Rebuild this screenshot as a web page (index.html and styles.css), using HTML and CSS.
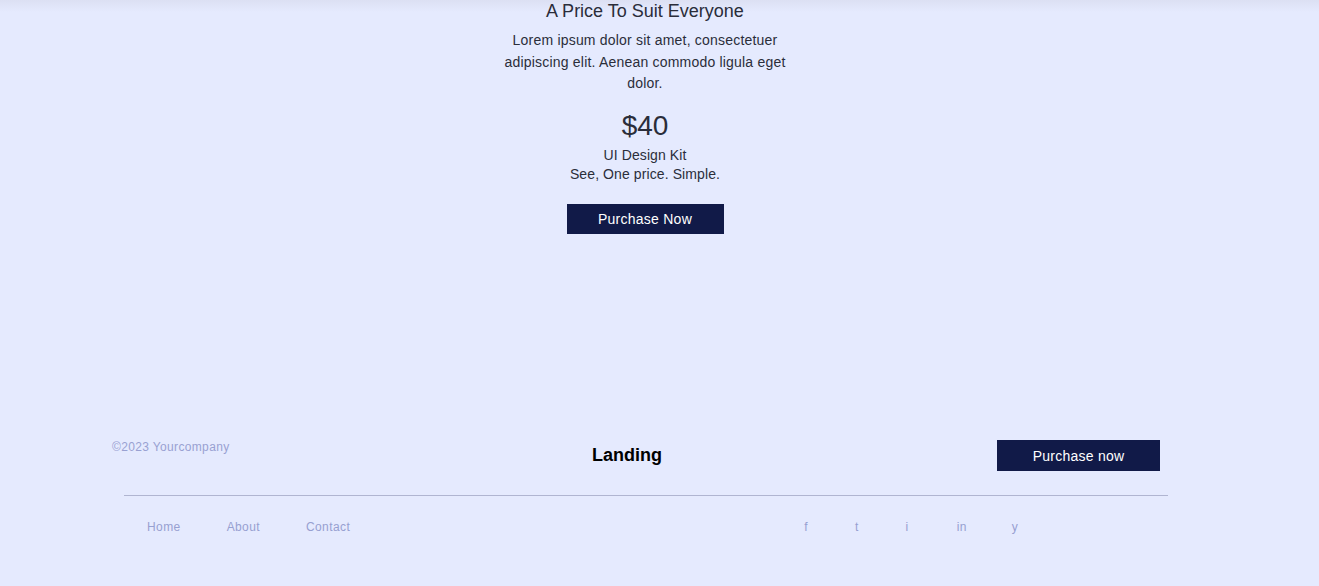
FILE: index.html
```html
<!DOCTYPE html>
<html lang="en">
<head>
<meta charset="utf-8">
<title>Landing</title>
<link rel="stylesheet" href="styles.css">
</head>
<body>
<main class="pricing">
  <h2 class="pricing-title">A Price To Suit Everyone</h2>
  <p class="pricing-text">Lorem ipsum dolor sit amet, consectetuer adipiscing elit. Aenean commodo ligula eget dolor.</p>
  <div class="pricing-amount">$40</div>
  <div class="pricing-meta">UI Design Kit<br>See, One price. Simple.</div>
  <a class="btn btn-main" href="#">Purchase Now</a>
</main>
<footer class="footer">
  <div class="footer-top">
    <div class="copyright">©2023 Yourcompany</div>
    <div class="brand">Landing</div>
    <a class="btn btn-footer" href="#">Purchase now</a>
  </div>
  <div class="footer-rule"></div>
  <div class="footer-bottom">
    <nav class="footer-links">
      <a href="#">Home</a>
      <a href="#">About</a>
      <a href="#">Contact</a>
    </nav>
    <nav class="social">
      <a href="#">f</a>
      <a href="#">t</a>
      <a href="#">i</a>
      <a class="social-in" href="#">in</a>
      <a class="social-y" href="#">y</a>
    </nav>
  </div>
</footer>
</body>
</html>
```

FILE: styles.css
```css
html, body {
  margin: 0;
  padding: 0;
}
body {
  width: 1319px;
  height: 586px;
  overflow: hidden;
  background: linear-gradient(to bottom, #dce0f3 0, #e5eafe 12px, #e5eafe 100%);
  font-family: "Liberation Sans", Arial, sans-serif;
  color: #2b2e3a;
}
a { text-decoration: none; }

.pricing {
  box-sizing: border-box;
  height: 440px;
  padding-right: 29px;
  display: flex;
  flex-direction: column;
  align-items: center;
  text-align: center;
}
.pricing-title {
  margin: 0;
  font-size: 18px;
  line-height: 22px;
  font-weight: 400;
  color: #2a2d3a;
}
.pricing-text {
  margin: 8px 0 0;
  width: 292px;
  font-size: 14px;
  line-height: 21.5px;
  letter-spacing: 0.2px;
  color: #2b2e3a;
}
.pricing-amount {
  margin-top: 15px;
  font-size: 28px;
  line-height: 32px;
  color: #2a2d3a;
}
.pricing-meta {
  margin-top: 4.5px;
  font-size: 14px;
  line-height: 19px;
  letter-spacing: 0.1px;
  color: #2b2e3a;
}
.btn {
  display: flex;
  align-items: center;
  justify-content: center;
  height: 30px;
  background: #111a48;
  color: #fff;
  font-size: 14px;
  letter-spacing: 0.25px;
}
.btn-main {
  margin-top: 19.5px;
  width: 157px;
}

.footer-top {
  display: grid;
  grid-template-columns: 480px 405px 163px;
  align-items: start;
  padding-left: 112px;
}
.copyright {
  font-size: 12px;
  line-height: 14px;
  letter-spacing: 0.35px;
  color: #99a1d2;
}
.brand {
  font-size: 18px;
  line-height: 30px;
  font-weight: 700;
  color: #000;
}
.btn-footer {
  width: 163px;
  height: 31px;
}
.footer-rule {
  margin: 24px 0 0 124px;
  width: 1044px;
  height: 1px;
  background: #b0b5d1;
}
.footer-bottom {
  display: flex;
  margin-top: 24px;
  padding-left: 147px;
  font-size: 12px;
  line-height: 14px;
  letter-spacing: 0.4px;
}
.footer-links {
  display: flex;
  gap: 46px;
}
.footer-links a,
.social a {
  color: #97a0d1;
}
.social {
  display: flex;
  gap: 47px;
  margin-left: 454px;
}
.social .social-in {
  margin-left: 1px;
}
.social .social-y {
  margin-left: -2px;
}
```
